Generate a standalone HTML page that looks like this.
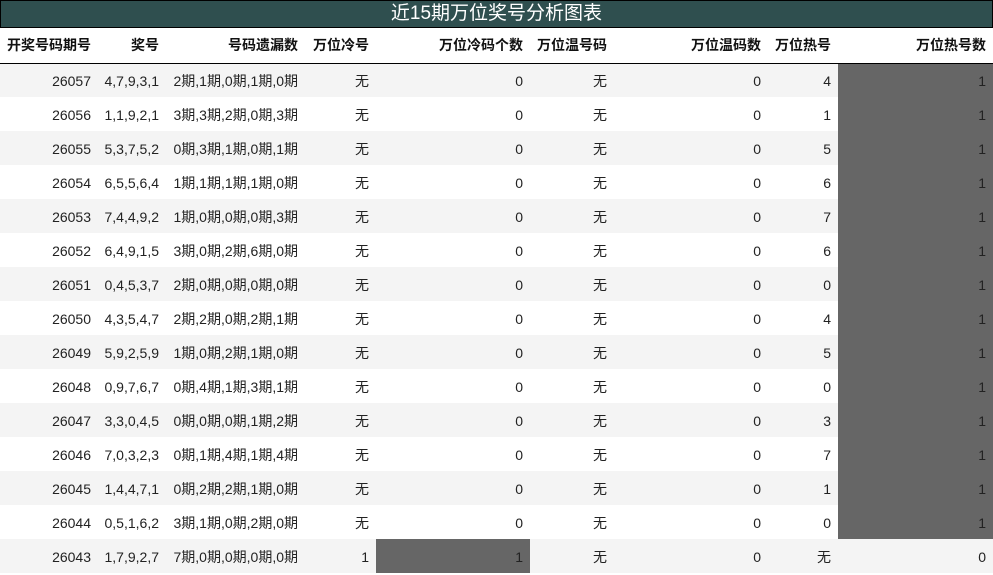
<!DOCTYPE html>
<html><head><meta charset="utf-8"><style>
*{margin:0;padding:0;box-sizing:border-box}
body{width:993px;height:575px;background:#fff;font-family:"Liberation Sans","Noto Sans CJK SC",sans-serif;color:#222;overflow:hidden}
.title{height:28px;background:#2f4f4f;border:1px solid #000;color:#fff;text-align:center;font-size:19px;line-height:26px}
table{border-collapse:collapse;table-layout:fixed;width:993px}
td,th{text-align:right;padding-right:7px;font-size:14px;height:34px;white-space:nowrap;overflow:hidden}
td{padding-top:2px}
th{font-weight:bold;height:35px;border-bottom:1px solid #000;color:#111}
tr.o td{background:#f4f4f4}
td.d{background:#666!important}
</style></head><body>
<div class="title">近15期万位奖号分析图表</div>
<table>
<colgroup><col style="width:98px"><col style="width:68px"><col style="width:139px"><col style="width:71px"><col style="width:154px"><col style="width:84px"><col style="width:154px"><col style="width:70px"><col style="width:155px"></colgroup>
<tr><th>开奖号码期号</th><th>奖号</th><th>号码遗漏数</th><th>万位冷号</th><th>万位冷码个数</th><th>万位温号码</th><th>万位温码数</th><th>万位热号</th><th>万位热号数</th></tr>
<tr class="o"><td>26057</td><td>4,7,9,3,1</td><td>2期,1期,0期,1期,0期</td><td>无</td><td>0</td><td>无</td><td>0</td><td>4</td><td class="d">1</td></tr>
<tr><td>26056</td><td>1,1,9,2,1</td><td>3期,3期,2期,0期,3期</td><td>无</td><td>0</td><td>无</td><td>0</td><td>1</td><td class="d">1</td></tr>
<tr class="o"><td>26055</td><td>5,3,7,5,2</td><td>0期,3期,1期,0期,1期</td><td>无</td><td>0</td><td>无</td><td>0</td><td>5</td><td class="d">1</td></tr>
<tr><td>26054</td><td>6,5,5,6,4</td><td>1期,1期,1期,1期,0期</td><td>无</td><td>0</td><td>无</td><td>0</td><td>6</td><td class="d">1</td></tr>
<tr class="o"><td>26053</td><td>7,4,4,9,2</td><td>1期,0期,0期,0期,3期</td><td>无</td><td>0</td><td>无</td><td>0</td><td>7</td><td class="d">1</td></tr>
<tr><td>26052</td><td>6,4,9,1,5</td><td>3期,0期,2期,6期,0期</td><td>无</td><td>0</td><td>无</td><td>0</td><td>6</td><td class="d">1</td></tr>
<tr class="o"><td>26051</td><td>0,4,5,3,7</td><td>2期,0期,0期,0期,0期</td><td>无</td><td>0</td><td>无</td><td>0</td><td>0</td><td class="d">1</td></tr>
<tr><td>26050</td><td>4,3,5,4,7</td><td>2期,2期,0期,2期,1期</td><td>无</td><td>0</td><td>无</td><td>0</td><td>4</td><td class="d">1</td></tr>
<tr class="o"><td>26049</td><td>5,9,2,5,9</td><td>1期,0期,2期,1期,0期</td><td>无</td><td>0</td><td>无</td><td>0</td><td>5</td><td class="d">1</td></tr>
<tr><td>26048</td><td>0,9,7,6,7</td><td>0期,4期,1期,3期,1期</td><td>无</td><td>0</td><td>无</td><td>0</td><td>0</td><td class="d">1</td></tr>
<tr class="o"><td>26047</td><td>3,3,0,4,5</td><td>0期,0期,0期,1期,2期</td><td>无</td><td>0</td><td>无</td><td>0</td><td>3</td><td class="d">1</td></tr>
<tr><td>26046</td><td>7,0,3,2,3</td><td>0期,1期,4期,1期,4期</td><td>无</td><td>0</td><td>无</td><td>0</td><td>7</td><td class="d">1</td></tr>
<tr class="o"><td>26045</td><td>1,4,4,7,1</td><td>0期,2期,2期,1期,0期</td><td>无</td><td>0</td><td>无</td><td>0</td><td>1</td><td class="d">1</td></tr>
<tr><td>26044</td><td>0,5,1,6,2</td><td>3期,1期,0期,2期,0期</td><td>无</td><td>0</td><td>无</td><td>0</td><td>0</td><td class="d">1</td></tr>
<tr class="o"><td>26043</td><td>1,7,9,2,7</td><td>7期,0期,0期,0期,0期</td><td>1</td><td class="d">1</td><td>无</td><td>0</td><td>无</td><td>0</td></tr>
</table>
</body></html>
